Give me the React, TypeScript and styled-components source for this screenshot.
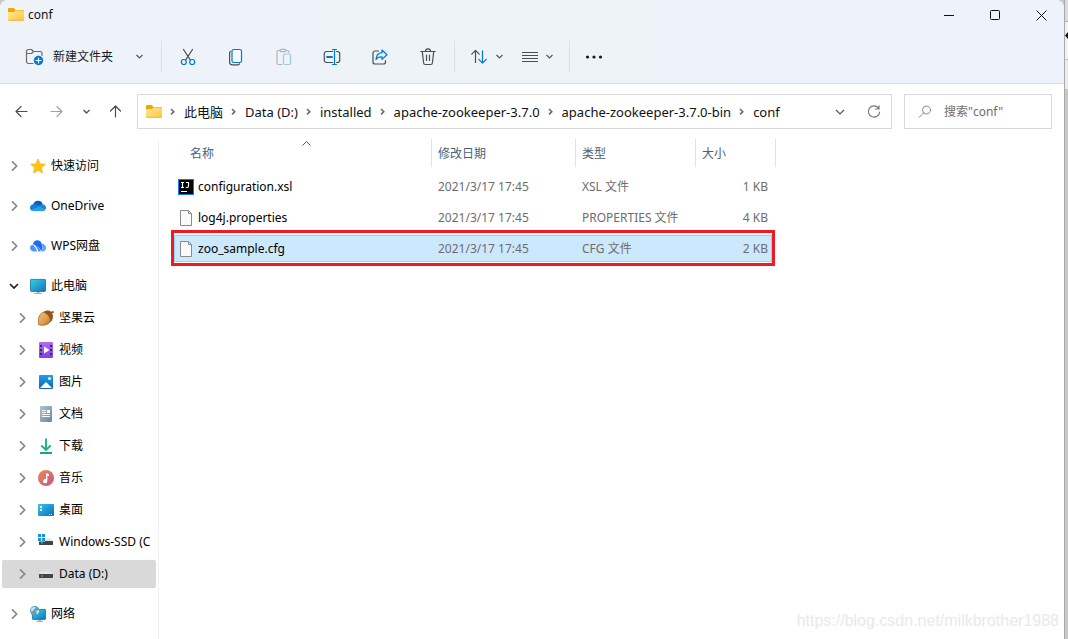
import React from "react";
import styled, { createGlobalStyle, css } from "styled-components";

const GlobalStyle = createGlobalStyle`
  *, *::before, *::after { box-sizing: border-box; }
  body {
    margin: 0;
    background: #c9c9c9;
    color: #111;
    font: 12px/16px "Noto Sans", "Noto Sans CJK SC", sans-serif;
  }
  button, input { font: inherit; color: inherit; }
  svg { display: block; flex: none; }
`;

const Desktop = styled.div`
  display: flex;
  min-height: 100vh;
  background: #c8c8c8;
`;

const Window = styled.div`
  position: relative;
  flex: 1;
  min-width: 0;
  display: flex;
  flex-direction: column;
  background: #fff;
  border-radius: 8px 8px 0 0;
  overflow: hidden;
`;

const DesktopEdge = styled.div`
  width: 4px;
  padding-top: 31px;
  border-left: 1px solid #a9a9a9;
  background: linear-gradient(#dcdcdc 0 21px, #b9b9b9 21px 22px, #f1f1f1 22px 59px, #c4c4c4 59px 60px, #ececec 60px 89px, #c8c8c8 89px);
`;

const Header = styled.header`
  background: linear-gradient(90deg, #eef3fa 0, #eef3fa 25%, #eef3f7 40%, #eef3f7 55%, #eef3fb 70%);
  border-bottom: 1px solid #d8dbe0;
`;

const TitleBar = styled.div`
  display: flex;
  align-items: center;
  height: 30px;
  padding-left: 8px;
`;

const Title = styled.h1`
  margin: 0 auto 0 4px;
  font-size: 12px;
  font-weight: 400;
`;

const IconButton = styled.button<{ $w: number; $h?: number }>`
  display: flex;
  align-items: center;
  justify-content: center;
  flex: none;
  width: ${(p) => p.$w}px;
  height: ${(p) => p.$h ?? 32}px;
  gap: 7px;
  padding: 0;
  border: 0;
  background: none;
  color: #4d4d4d;
`;

const Toolbar = styled.div`
  display: flex;
  align-items: center;
  height: 53px;
  padding-left: 16px;
`;

const NewButton = styled(IconButton)`
  justify-content: flex-start;
  gap: 8px;
  padding: 0 17px 0 9px;
  color: #1a1a1a;

  & > :last-child { margin-left: auto; }
`;

const ToolGroup = styled.div`
  display: flex;
  padding: 0 2px;
`;

const ViewButton = styled(IconButton)`
  padding-right: 13px;
`;

const Divider = styled.span`
  width: 1px;
  height: 32px;
  background: #dce0e6;
`;

const Nav = styled.nav`
  display: flex;
  align-items: center;
  padding: 10px 12px 10px 4px;
`;

const AddressBar = styled.div`
  display: flex;
  align-items: center;
  flex: 1;
  min-width: 0;
  height: 35px;
  margin-left: 4px;
  padding-left: 8px;
  border: 1px solid #d9d9d9;
`;

const Crumbs = styled.ol`
  display: flex;
  align-items: center;
  flex: 1;
  min-width: 0;
  margin: 0;
  padding: 0;
  list-style: none;
  overflow: hidden;
  white-space: nowrap;
  font-size: 13px;
`;

const Crumb = styled.li`
  display: flex;
  align-items: center;

  svg { margin: 0 7px 0 6px; }
  a { color: inherit; text-decoration: none; }
`;

const Search = styled.label`
  display: flex;
  align-items: center;
  flex: 0 0 148px;
  min-width: 0;
  height: 35px;
  margin-left: 12px;
  padding-left: 13px;
  gap: 12px;
  border: 1px solid #d9d9d9;
  color: #8a8a8a;
`;

const SearchInput = styled.input`
  flex: 1;
  min-width: 0;
  padding: 0;
  border: 0;
  outline: 0;
  background: none;
  &::placeholder { color: #6d6d6d; opacity: 1; }
`;

const Body = styled.div`
  display: flex;
  flex: 1;
`;

const Sidebar = styled.aside`
  flex: 0 0 159px;
  padding: 13px 2px 11px;
  border-right: 1px solid #f2f2f2;
`;

const Tree = styled.ul`
  display: flex;
  flex-direction: column;
  gap: 4px;
  margin: 0;
  padding: 0;
  list-style: none;
`;

const TreeItem = styled.li<{ $spaced?: boolean }>`
  ${(p) => p.$spaced && css`margin-top: 8px;`}
`;

const TreeButton = styled.button<{ $nested?: boolean; $selected?: boolean }>`
  display: flex;
  align-items: center;
  width: 154px;
  height: 28px;
  padding: 0 0 0 ${(p) => (p.$nested ? 14 : 6)}px;
  border: 0;
  border-radius: 2px;
  background: ${(p) => (p.$selected ? "#d9d9d9" : "none")};
  text-align: left;
  white-space: nowrap;
  overflow: hidden;
  color: #000;

  svg:nth-child(2) { margin: 0 5px 0 10px; }
`;

const Main = styled.main`
  flex: 1;
  min-width: 0;
  padding-left: 13px;
`;

const FileTable = styled.table`
  display: block;
  width: 604px;
`;

const TableHead = styled.thead`
  display: block;
  padding-bottom: 4px;
`;

const TableBody = styled.tbody`
  display: block;
`;

const Row = styled.tr<{ $selected?: boolean }>`
  position: relative;
  display: grid;
  grid-template-columns: 260px 144px 120px 80px;
  align-items: center;

  ${(p) =>
    p.$selected &&
    css`
      &::before {
        content: "";
        position: absolute;
        inset: 2px 4px 2px 2px;
        background: #cce8ff;
        border: 1px solid #99d1ff;
      }
      &::after {
        content: "";
        position: absolute;
        inset: -3px 1px -2px -1px;
        border: 3px solid #ed1c24;
      }
    `}
`;

const HeadCell = styled.th<{ $first?: boolean }>`
  position: relative;
  height: 28px;
  padding: 7px 0 5px ${(p) => (p.$first ? 18 : 6)}px;
  border-right: 1px solid #e2e2e2;
  color: #4c607a;
  font-weight: 400;
  text-align: left;
`;

const SortMark = styled.span`
  position: absolute;
  top: 0;
  left: 50%;
  color: #6d6d6d;
`;

const Cell = styled.td<{ $right?: boolean }>`
  position: relative;
  z-index: 1;
  display: flex;
  align-items: center;
  justify-content: ${(p) => (p.$right ? "flex-end" : "flex-start")};
  height: 31px;
  padding: 0 8px 0 6px;
  gap: 4px;
  color: #6d6d6d;
`;

const NameCell = styled(Cell)`
  color: #000;
`;

const Watermark = styled.div`
  position: absolute;
  right: 5px;
  bottom: 8px;
  color: #e9e9e9;
  font: 16px/20px "Liberation Sans", sans-serif;
`;

type Dir = "right" | "down" | "up";
const chevronPaths: Record<Dir, string> = {
  right: "M3 1l3.5 3.5L3 8",
  down: "M1.5 3l3 3 3-3",
  up: "M.5 6.5l4-4 4 4",
};

const Chevron = ({ dir, color = "#555", weight = 1.2, size = 9 }: { dir: Dir; color?: string; weight?: number; size?: number }) => (
  <svg width={size} height={size} viewBox="0 0 9 9" fill="none" stroke={color} strokeWidth={weight}>
    <path d={chevronPaths[dir]} />
  </svg>
);

const CrumbChevron = () => (
  <svg width="9" height="9" viewBox="0 0 9 9" fill="none" stroke="#666" strokeWidth="1.500">
    <path d="M3 2l2.800 2.700L3 7.400" />
  </svg>
);

const Line = ({ w = 18, h = 18, children }: { w?: number; h?: number; children: React.ReactNode }) => (
  <svg width={w} height={h} viewBox={`0 0 ${w} ${h}`} fill="none" stroke="currentColor" strokeWidth="1.2" strokeLinecap="round" strokeLinejoin="round">
    {children}
  </svg>
);

const BLUE = "#0078d4";

const FolderIcon = () => (
  <svg width="16" height="16" viewBox="0 0 16 16">
    <defs>
      <linearGradient id="folder" x1="0" y1="0" x2="1" y2="1">
        <stop offset="0" stopColor="#ffe9a0" />
        <stop offset="1" stopColor="#ffc636" />
      </linearGradient>
    </defs>
    <path d="M0 2a1 1 0 0 1 1-1h4.500a1 1 0 0 1 .8.4L7.500 3H15a1 1 0 0 1 1 1V8H0z" fill="#efa800" />
    <path d="M0 6a1 1 0 0 1 1-1h5L7.500 3.500H15a1 1 0 0 1 1 1v8a1 1 0 0 1-1 1H1a1 1 0 0 1-1-1z" fill="url(#folder)" />
    <path d="M.5 13.300h15" stroke="#e9a82a" strokeWidth=".8" />
  </svg>
);

const NewFolderIcon = () => (
  <Line w={20}>
    <g stroke="#6a6a6a">
      <path d="M8 15.500H3.500a2 2 0 0 1-2-2V3.500a2 2 0 0 1 2-2h3l2 2h6.500a2 2 0 0 1 2 2v2" />
      <path d="M1.500 5.500h5l2-2" />
    </g>
    <circle cx="13.500" cy="12.500" r="4.700" fill={BLUE} stroke="none" />
    <path d="M13.500 10v5M11 12.500h5" stroke="#fff" />
  </Line>
);

const CutIcon = () => (
  <Line>
    <path d="M4.500 1.500l6.800 10.300M13.500 1.500L6.700 11.800" />
    <g stroke={BLUE}>
      <circle cx="4.800" cy="14" r="2.500" />
      <circle cx="13.200" cy="14" r="2.500" />
    </g>
  </Line>
);

const CopyIcon = () => (
  <Line>
    <path d="M3.500 3.500a1.500 1.500 0 0 0-.9 1.500v9a2.800 2.800 0 0 0 2.800 2.800h5.600a1.500 1.500 0 0 0 1.500-1" />
    <rect x="5" y="1.500" width="9.500" height="13" rx="1.800" stroke={BLUE} fill="#f6f9fd" />
  </Line>
);

const PasteIcon = () => (
  <Line>
    <g stroke="#b3b6ba">
      <path d="M7 16.500H3.500a1.500 1.500 0 0 1-1.500-1.500V4a1.500 1.500 0 0 1 1.500-1.500H5M11 2.500h1.500A1.500 1.500 0 0 1 14 4v.5" />
      <rect x="5" y="1.300" width="6" height="2.400" rx="1.200" />
    </g>
    <rect x="8.500" y="6" width="7" height="10.500" rx="1.500" stroke="#99c7ed" />
  </Line>
);

const RenameIcon = () => (
  <Line>
    <path d="M9.500 3.500h-6A2.200 2.200 0 0 0 1.300 5.700v6.600a2.200 2.200 0 0 0 2.200 2.200h6M13.500 3.500h1a2.200 2.200 0 0 1 2.200 2.200v6.600a2.200 2.200 0 0 1-2.200 2.200h-1" />
    <g stroke={BLUE}>
      <path d="M4 9h5" strokeWidth="1.800" />
      <path d="M11.500 1.500v15M9.500 1.500h4M9.500 16.500h4" />
    </g>
  </Line>
);

const ShareIcon = () => (
  <Line>
    <path d="M7.500 3H4a2 2 0 0 0-2 2v9a2 2 0 0 0 2 2h8.500a2 2 0 0 0 2-2v-1.500" />
    <path d="M11 2l5 4.700-5 4.700V8.800C8 8.600 6.300 9.500 5 11.500c.3-4 2.500-6.500 6-6.800z" stroke={BLUE} fill="#e3f0fb" />
  </Line>
);

const DeleteIcon = () => (
  <Line>
    <path d="M1.800 3.500h14.400M6.500 3.300a2.500 2.500 0 0 1 5 0M3.300 3.700l1.300 11a1.800 1.800 0 0 0 1.800 1.800h5.200a1.800 1.800 0 0 0 1.800-1.800l1.300-11M7.500 7v5.500M10.500 7v5.500" />
  </Line>
);

const SortIcon = () => (
  <Line>
    <path d="M5.500 14.500v-12M1.800 6.200l3.700-3.800 3.700 3.800" />
    <path d="M12.500 2.800v12M8.800 11.300l3.700 3.800 3.700-3.800" stroke={BLUE} />
  </Line>
);

const ViewIcon = () => (
  <svg width="16" height="12" viewBox="0 0 16 12" fill="none" stroke="#4d4d4d">
    <path d="M0 1.500h16M0 4.500h16M0 7.500h16M0 10.500h16" />
  </svg>
);

const MoreIcon = () => (
  <svg width="18" height="6" viewBox="0 0 18 6" fill="#1a1a1a">
    <circle cx="2.500" cy="3" r="1.600" />
    <circle cx="9" cy="3" r="1.600" />
    <circle cx="15.500" cy="3" r="1.600" />
  </svg>
);

const BackIcon = () => (
  <Line w={14} h={14}><path d="M12 6.500H1M6 1.500l-5 5 5 5" /></Line>
);
const ForwardIcon = () => (
  <Line w={14} h={14}><path d="M1 6.500h11M7 1.500l5 5-5 5" stroke="#a0a0a0" /></Line>
);
const UpIcon = () => (
  <Line w={14} h={14}><path d="M6.500 12V1M1.500 6l5-5 5 5" /></Line>
);
const RefreshIcon = () => (
  <Line w={14} h={14}><path d="M12.600 7A5.600 5.600 0 1 1 11.500 3.200M12 .8v3.200H8.500" stroke="#777" /></Line>
);
const SearchIcon = () => (
  <Line w={14} h={14}><circle cx="8.500" cy="5" r="4" strokeWidth="1" /><path d="M5.500 8L1 12.500" strokeWidth="1" /></Line>
);

const Pic = ({ children }: { children: React.ReactNode }) => (
  <svg width="16" height="16" viewBox="0 0 16 16">{children}</svg>
);

const StarIcon = () => (
  <Pic><path d="M8 1l2.200 4.700 5.100.6-3.800 3.500 1 5.100L8 12.400l-4.500 2.500 1-5.100L.7 6.300l5.100-.6z" fill="#ffc414" stroke="#f5ae0a" strokeWidth=".6" strokeLinejoin="round" /></Pic>
);
const OneDriveIcon = () => (
  <Pic>
    <path d="M3.200 6.500A5 5 0 0 1 12.700 6l-4 5z" fill="#0a5fb4" />
    <path d="M3.600 6C1.500 6.200 0 7.700 0 9.700 0 11 .7 12 1.700 12.600L10 8.500 6.800 6.600A5 5 0 0 0 3.600 6z" fill="#1480d8" />
    <path d="M12.200 6.200a3.900 3.900 0 0 0-2.400 1L8 8.300l7 3.700c.7-.6 1-1.300 1-2.200 0-2-1.600-3.600-3.800-3.600z" fill="#1386dd" />
    <path d="M1 12c.6.700 1.500 1.100 2.500 1.100h9.300c1.100 0 2-.5 2.600-1.300L9.300 8.600z" fill="#28a0ea" />
  </Pic>
);
const WpsIcon = () => (
  <Pic>
    <path d="M2.800 6.500C3.300 4 5 2.300 7.300 2.300c2 0 3.600 1.200 4.300 3.200.8 2 1.200 4.800-.3 7.700-1.500-3-4-6-8.500-6.700z" fill="#1f6cf0" />
    <path d="M11.500 5.800c2.700 0 4.500 1.700 4.500 3.900s-1.600 3.700-3.700 3.700h-.8c1.500-2.500 1.200-5.200 0-7.600z" fill="#5aa5fa" />
    <path d="M0 9.800C0 8 1.300 6.800 3 6.800c2 1.500 3.500 4 4 6.600H3.500C1.500 13.400 0 11.800 0 9.800z" fill="#4b98f8" />
    <path d="M3.800 6.800c3 .6 5.700 3.200 7 6.600H8.300C7.500 10.500 6 8.300 3.800 6.800z" fill="#3c86f6" />
    <path d="M3.300 6.900c2.300 1.300 3.900 3.600 4.600 6.500" stroke="#fff" strokeWidth=".8" fill="none" />
  </Pic>
);
const MonitorIcon = () => (
  <Pic>
    <defs>
      <linearGradient id="screen" x1="0" y1="0" x2="1" y2="1">
        <stop offset="0" stopColor="#35d0e6" />
        <stop offset="1" stopColor="#1175bd" />
      </linearGradient>
    </defs>
    <path d="M7 13h2.500v2H12v1H4v-1h3z" fill="#a7b0b8" />
    <rect x=".4" y="1.400" width="15.200" height="12" rx=".8" fill="url(#screen)" stroke="#176a9e" strokeWidth=".8" />
  </Pic>
);
const NutIcon = () => (
  <Pic>
    <defs>
      <linearGradient id="nut" x1="0" y1="0" x2="1" y2="1">
        <stop offset="0" stopColor="#f0c47c" />
        <stop offset=".6" stopColor="#dc9c48" />
        <stop offset="1" stopColor="#a8642a" />
      </linearGradient>
    </defs>
    <path d="M6 2C2.500 3.200.5 6 .4 9.500c0 2 .3 3.600.2 5.200 4 1.200 9.500.8 11.900-3.500C14 8 10.500 1.500 6 2z" fill="url(#nut)" stroke="#9a5a24" strokeWidth=".7" />
    <path d="M5.500 2.200C7.500.3 11-.2 13 1.800L15.700.9l.3 1.500-1.800.8c1.400 2.600.9 6.800-1.600 9C12.400 8.200 9.700 3.700 5.500 2.200z" fill="#945322" />
  </Pic>
);
const VideoIcon = () => (
  <Pic>
    <defs>
      <linearGradient id="video" x1="0" y1="0" x2="0" y2="1">
        <stop offset="0" stopColor="#b26cf0" />
        <stop offset="1" stopColor="#8040dd" />
      </linearGradient>
    </defs>
    <rect x="1" y="0" width="14" height="16" rx="1" fill="url(#video)" />
    <path d="M2 3h2v2H2zM2 7h2v2H2zM2 11h2v2H2zM12 3h2v2h-2zM12 7h2v2h-2zM12 11h2v2h-2z" fill="#45217f" />
    <path d="M6 4.500v7L11.500 8z" fill="#fff" />
  </Pic>
);
const PictureIcon = () => (
  <Pic>
    <defs>
      <linearGradient id="picture" x1="0" y1="0" x2="0" y2="1">
        <stop offset="0" stopColor="#1fa0ea" />
        <stop offset="1" stopColor="#0e62bd" />
      </linearGradient>
    </defs>
    <rect x="1" y="1" width="14" height="14" rx="1" fill="url(#picture)" />
    <path d="M2 14l5.200-5.300a1.200 1.200 0 0 1 1.600 0L14 14z" fill="#fff" />
    <circle cx="11.500" cy="4.500" r="1.500" fill="#e8f5ff" />
  </Pic>
);
const DocumentIcon = () => (
  <Pic>
    <defs>
      <linearGradient id="document" x1="0" y1="0" x2="1" y2="1">
        <stop offset="0" stopColor="#adc2d6" />
        <stop offset="1" stopColor="#6887a5" />
      </linearGradient>
    </defs>
    <rect x="2" y="0" width="12" height="16" rx="1" fill="url(#document)" />
    <path d="M4 4.500h4M4 6.500h4M4 8.500h8M4 10.500h8" stroke="#fff" />
    <rect x="9" y="4" width="3" height="3" fill="#fff" />
  </Pic>
);
const DownloadIcon = () => (
  <Pic>
    <path d="M8 .5V12M3.300 7.500L8 12l4.700-4.500" stroke="#1db187" strokeWidth="1.900" fill="none" />
    <path d="M2 15h12" stroke="#1fa283" strokeWidth="1.900" />
  </Pic>
);
const MusicIcon = () => (
  <Pic>
    <defs>
      <linearGradient id="music" x1="0" y1="0" x2="1" y2="1">
        <stop offset="0" stopColor="#e98a50" />
        <stop offset="1" stopColor="#c4548a" />
      </linearGradient>
    </defs>
    <circle cx="8" cy="8" r="8" fill="url(#music)" />
    <path d="M8 3v6.200A2.100 2.100 0 1 0 9.300 11V6H11V4.200z" fill="#fff" />
  </Pic>
);
const DesktopIcon = () => (
  <Pic>
    <defs>
      <linearGradient id="desktop" x1="0" y1="0" x2="1" y2="1">
        <stop offset="0" stopColor="#33c8e8" />
        <stop offset="1" stopColor="#0c6dbb" />
      </linearGradient>
    </defs>
    <rect x="0" y="2" width="16" height="12" rx=".8" fill="url(#desktop)" />
    <path d="M2 4h2v2H2zM2 7h2v2H2zM11 12h1v1h-1zM13 12h1v1h-1z" fill="#fff" />
  </Pic>
);
const DriveShape = ({ y = 0 }: { y?: number }) => (
  <g transform={`translate(0 ${y})`}>
    <path d="M3 5.500h10L15 9H1z" fill="#e2e4e6" />
    <rect x="1" y="8" width="14" height="4" rx=".4" fill="#444" />
    <rect x="3" y="9.500" width="2" height="1" fill="#37e03c" />
  </g>
);
const SystemDriveIcon = () => (
  <Pic>
    <DriveShape y={-1} />
    <path d="M0 0h7v7.500H0z" fill="#fff" />
    <path d="M0 0h3v3H0zM4 0h3v3H4zM0 4h3v3H0zM4 4h3v3H4z" fill="#1590e0" />
  </Pic>
);
const DriveIcon = () => <Pic><DriveShape /></Pic>;
const NetworkIcon = () => (
  <Pic>
    <path d="M8.500 13H11v2h2v1H6.500v-1h2z" fill="#a7b0b8" />
    <rect x="2.400" y="3.400" width="13.200" height="10" rx=".6" fill="url(#screen)" stroke="#176a9e" strokeWidth=".8" />
    <circle cx="4.800" cy="4.800" r="4.800" fill="#5b9dbb" />
    <path d="M1 3C3 .5 5 1 6 1.500 5 3.500 3.500 3 3 5L1.500 6zM6 5l3-1c.3 2-.5 3.700-2 4.500z" fill="#c8e4e8" />
  </Pic>
);
const IntellijIcon = () => (
  <Pic>
    <rect width="16" height="16" fill="#087cfa" />
    <rect x="1" y="1" width="14" height="14" fill="#000" />
    <path d="M3 3.500h3M3 8.500h3M4.500 3.500v5M8 3.500h2.500v3.800a1.200 1.200 0 0 1-1.200 1.200H7.800M3 12.500h6" stroke="#fff" strokeWidth="1.200" fill="none" />
  </Pic>
);
const FileIcon = () => (
  <Pic>
    <path d="M2.500.5h8l3 3v12h-11z" fill="#fafafa" stroke="#8b8b8b" />
    <path d="M10.500.5v3h3" fill="none" stroke="#8b8b8b" />
  </Pic>
);

const crumbs = ["此电脑", "Data (D:)", "installed", "apache-zookeeper-3.7.0", "apache-zookeeper-3.7.0-bin", "conf"];

type Place = { label: string; icon: React.ReactNode; nested?: boolean; open?: boolean; selected?: boolean; spaced?: boolean };
const places: Place[] = [
  { label: "快速访问", icon: <StarIcon /> },
  { label: "OneDrive", icon: <OneDriveIcon />, spaced: true },
  { label: "WPS网盘", icon: <WpsIcon />, spaced: true },
  { label: "此电脑", icon: <MonitorIcon />, spaced: true, open: true },
  { label: "坚果云", icon: <NutIcon />, nested: true },
  { label: "视频", icon: <VideoIcon />, nested: true },
  { label: "图片", icon: <PictureIcon />, nested: true },
  { label: "文档", icon: <DocumentIcon />, nested: true },
  { label: "下载", icon: <DownloadIcon />, nested: true },
  { label: "音乐", icon: <MusicIcon />, nested: true },
  { label: "桌面", icon: <DesktopIcon />, nested: true },
  { label: "Windows-SSD (C", icon: <SystemDriveIcon />, nested: true },
  { label: "Data (D:)", icon: <DriveIcon />, nested: true, selected: true },
  { label: "网络", icon: <NetworkIcon />, spaced: true },
];

const files = [
  { name: "configuration.xsl", date: "2021/3/17 17:45", type: "XSL 文件", size: "1 KB", icon: <IntellijIcon /> },
  { name: "log4j.properties", date: "2021/3/17 17:45", type: "PROPERTIES 文件", size: "4 KB", icon: <FileIcon /> },
  { name: "zoo_sample.cfg", date: "2021/3/17 17:45", type: "CFG 文件", size: "2 KB", icon: <FileIcon />, selected: true },
];

const tools = [
  { label: "剪切", icon: <CutIcon /> },
  { label: "复制", icon: <CopyIcon /> },
  { label: "粘贴", icon: <PasteIcon /> },
  { label: "重命名", icon: <RenameIcon /> },
  { label: "共享", icon: <ShareIcon /> },
  { label: "删除", icon: <DeleteIcon /> },
];

export default function App() {
  return (
    <Desktop>
      <GlobalStyle />
      <Window>
        <Header>
          <TitleBar>
            <FolderIcon />
            <Title>conf</Title>
            <IconButton $w={46} $h={28} aria-label="最小化">
              <svg width="11" height="11" stroke="#111"><path d="M0 5.500h10" /></svg>
            </IconButton>
            <IconButton $w={46} $h={28} aria-label="最大化">
              <svg width="11" height="11" stroke="#111" fill="none"><rect x=".5" y=".5" width="9" height="9" rx="1" /></svg>
            </IconButton>
            <IconButton $w={46} $h={28} aria-label="关闭">
              <svg width="11" height="11" stroke="#111"><path d="M.5.5l10 10M10.500.5l-10 10" /></svg>
            </IconButton>
          </TitleBar>
          <Toolbar>
            <NewButton $w={145}>
              <NewFolderIcon />
              <span>新建文件夹</span>
              <Chevron dir="down" />
            </NewButton>
            <Divider />
            <ToolGroup>
              {tools.map((t) => (
                <IconButton key={t.label} $w={48} aria-label={t.label}>{t.icon}</IconButton>
              ))}
            </ToolGroup>
            <Divider />
            <IconButton $w={64} aria-label="排序"><SortIcon /><Chevron dir="down" /></IconButton>
            <ViewButton $w={50} aria-label="查看"><ViewIcon /><Chevron dir="down" /></ViewButton>
            <Divider />
            <IconButton $w={48} aria-label="更多"><MoreIcon /></IconButton>
          </Toolbar>
        </Header>

        <Nav aria-label="导航">
          <IconButton $w={35} aria-label="后退"><BackIcon /></IconButton>
          <IconButton $w={35} aria-label="前进"><ForwardIcon /></IconButton>
          <IconButton $w={24} aria-label="最近浏览的位置"><Chevron dir="down" weight={1.4} /></IconButton>
          <IconButton $w={35} aria-label="向上"><UpIcon /></IconButton>
          <AddressBar>
            <FolderIcon />
            <Crumbs>
              {crumbs.map((c) => (
                <Crumb key={c}>
                  <CrumbChevron />
                  <a href="#">{c}</a>
                </Crumb>
              ))}
            </Crumbs>
            <IconButton $w={34} aria-label="以前的位置"><Chevron dir="down" size={12} weight={0.9} /></IconButton>
            <IconButton $w={34} aria-label="刷新"><RefreshIcon /></IconButton>
          </AddressBar>
          <Search>
            <SearchIcon />
            <SearchInput type="text" aria-label="搜索" placeholder={'搜索"conf"'} />
          </Search>
        </Nav>

        <Body>
          <Sidebar>
            <Tree>
              {places.map((p) => (
                <TreeItem key={p.label} $spaced={p.spaced}>
                  <TreeButton $nested={p.nested} $selected={p.selected}>
                    {p.open ? <Chevron dir="down" color="#222" weight={1.3} size={12} /> : <Chevron dir="right" color="#8a8a8a" weight={1.3} size={12} />}
                    {p.icon}
                    {p.label}
                  </TreeButton>
                </TreeItem>
              ))}
            </Tree>
          </Sidebar>
          <Main>
            <FileTable>
              <TableHead>
                <Row>
                  <HeadCell $first scope="col">
                    名称
                    <SortMark><Chevron dir="up" weight={1} /></SortMark>
                  </HeadCell>
                  <HeadCell scope="col">修改日期</HeadCell>
                  <HeadCell scope="col">类型</HeadCell>
                  <HeadCell scope="col">大小</HeadCell>
                </Row>
              </TableHead>
              <TableBody>
                {files.map((f) => (
                  <Row key={f.name} $selected={f.selected}>
                    <NameCell>{f.icon}{f.name}</NameCell>
                    <Cell>{f.date}</Cell>
                    <Cell>{f.type}</Cell>
                    <Cell $right>{f.size}</Cell>
                  </Row>
                ))}
              </TableBody>
            </FileTable>
          </Main>
        </Body>
        <Watermark>https://blog.csdn.net/milkbrother1988</Watermark>
      </Window>
      <DesktopEdge>
        <svg width="3" height="9" viewBox="0 0 3 9"><path d="M0 4.500L3 1v2.500h0v2V8z" fill="#111" /></svg>
      </DesktopEdge>
    </Desktop>
  );
}
